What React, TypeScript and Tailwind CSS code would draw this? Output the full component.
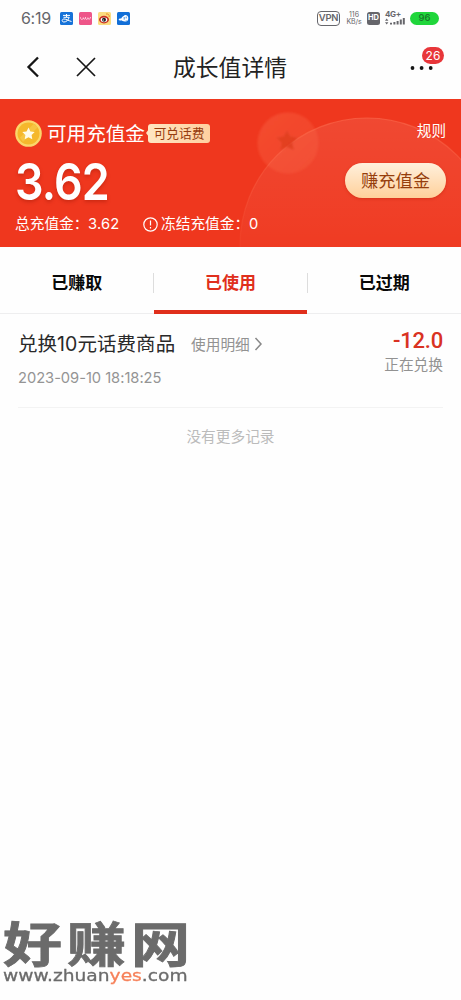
import React from "react";

const cjk = "font-['Noto_Sans_CJK_SC',sans-serif]";
const latin = "font-['Inter','Noto_Sans_CJK_SC',sans-serif]";

function StatusBar() {
  return (
    <div className={`flex h-9 items-center pl-[21px] pr-[22px] text-[#66666b] ${latin}`}>
      <span className="w-[39px] whitespace-nowrap text-[16px] leading-none tracking-[-0.3px]">6:19</span>
      <div className="flex gap-[6px]">
        <svg width="13" height="13" viewBox="0 0 13 13">
          <rect width="13" height="13" rx="1.5" fill="#1672d8" />
          <path d="M3 3.4h7M6.5 2v3M3.5 5.3h5.7C8.4 8.2 6.2 10 4 10 1.4 10 1.7 7 4 7c2.4 0 4.3 1.7 7.5 2.5" fill="none" stroke="#fff" strokeWidth="1" />
        </svg>
        <svg width="13" height="13" viewBox="0 0 13 13">
          <rect width="13" height="13" rx="1.5" fill="#ee5689" />
          <path d="M1.5 5.2c0 3 2.5 3 2.8.5 0 2 2.2 2 2.2-.5 0 3 2.2 3 2.4.5.3 2.4 2.4 2 2.6-.7" fill="none" stroke="#ffd8e4" strokeWidth="0.9" />
        </svg>
        <svg width="13" height="13" viewBox="0 0 13 13">
          <rect width="13" height="13" rx="1.5" fill="#fbdc80" />
          <ellipse cx="6" cy="7.6" rx="5" ry="3.8" fill="#c93022" />
          <ellipse cx="6" cy="7.8" rx="3.3" ry="2.4" fill="#fff" />
          <circle cx="6" cy="7.8" r="2" fill="#222" />
          <circle cx="5.4" cy="8" r="0.6" fill="#fff" />
          <path d="M8 2c2.2-.4 3.6 1 3.2 3" fill="none" stroke="#ed8a24" strokeWidth="1" />
        </svg>
        <svg width="13" height="13" viewBox="0 0 13 13">
          <rect width="13" height="13" rx="1.5" fill="#126fd7" />
          <path d="M1.5 7.5 3 6.3l1 .4c1-2 2.5-2.6 3.5-3.5 2-.4 3.5.5 3.8 2.5.3 2.3-1 3.9-3 3.8C6 9.600 5 8.600 4 8.300l-1 .5z" fill="#fff" />
          <path d="M7.200 5v2.600M9.200 4.600v1.800M9.200 8v.6" stroke="#126fd7" strokeWidth="0.8" />
        </svg>
      </div>
      <div className="ml-auto flex items-center">
        <span className="flex h-[15px] w-[23px] items-center justify-center rounded-[4px] border-[1.5px] border-[#66666b] text-[9.500px] font-semibold leading-none tracking-[-0.3px]">VPN</span>
        <span className="ml-[6px] flex w-[16px] flex-col items-center text-[7px] leading-[7px]">
          <span>116</span>
          <span className="whitespace-nowrap tracking-[-0.1px]">KB/s</span>
        </span>
        <span className="ml-[5px] flex h-[13px] w-[13px] items-center justify-center rounded-[2.500px] bg-[#66666b] text-[7.500px] font-bold leading-none text-white">HD</span>
        <span className="ml-[5px] flex w-[20px] flex-col">
          <span className="h-[7px] whitespace-nowrap text-[8px] font-bold leading-[7px] tracking-[-0.3px]">4G+</span>
          <svg width="20" height="7" viewBox="0 0 20 7" fill="#66666b">
            <path d="M0 2.800 1.700.500l1.700 2.300zM0 4.200l1.700 2.300 1.700-2.300zM5 4.800h2v1.700H5zM8.400 4h2v2.500h-2zM11.600 3h2v3.500h-2zM14.800 1.600h2v4.900h-2zM17.800 0h2v6.500h-2z" />
          </svg>
        </span>
        <span className="ml-[5px] flex h-[13px] w-[29px] items-center justify-center rounded-full bg-[#20d63b] text-[9.500px] font-medium leading-none text-[#187728]">96</span>
      </div>
    </div>
  );
}

function NavBar() {
  return (
    <div className="relative flex h-[63px] items-center pb-px">
      <svg className="ml-[26px] -mt-px" width="14" height="22" viewBox="0 0 14 22" fill="none" stroke="#161616" strokeWidth="2.300">
        <path d="M12 1.500 2.500 11 12 20.500" />
      </svg>
      <svg className="ml-[36px]" width="20" height="20" viewBox="0 0 20 20" fill="none" stroke="#161616" strokeWidth="1.700">
        <path d="M1 1 19 19M19 1 1 19" />
      </svg>
      <h1 className={`ml-[77px] whitespace-nowrap text-[22.800px] leading-[30px] text-[#222] ${cjk}`}>成长值详情</h1>
      <svg className="ml-auto mr-[27px] mt-px" width="24" height="4" viewBox="0 0 24 4" fill="#161616">
        <circle cx="2.500" cy="2" r="1.900" />
        <circle cx="11.600" cy="2" r="1.900" />
        <circle cx="20.700" cy="2" r="1.900" />
      </svg>
      <span className={`absolute right-[17px] top-[11px] flex h-[17px] w-[22px] items-center justify-center rounded-full bg-[#e8363a] text-[12px] leading-none text-white ${latin}`}>26</span>
    </div>
  );
}

function Coin() {
  return (
    <svg width="27" height="27" viewBox="0 0 27 27">
      <circle cx="13.500" cy="13.500" r="13.300" fill="#fbd66b" />
      <circle cx="13.500" cy="13.500" r="11" fill="#f5b82c" />
      <path d="M5 17.500 18.500 4a11 11 0 0 1 4 3.500L8 22z" fill="#fad257" opacity=".5" />
      <path d="m13.500 7.500 1.900 3.900 4.300.6-3.100 3 .7 4.300-3.800-2-3.800 2 .7-4.300-3.100-3 4.300-.6z" fill="#fffbe8" />
    </svg>
  );
}

function Balance() {
  return (
    <section className="relative h-[148px] overflow-hidden bg-[#ef371e] text-white">
      <svg className="absolute inset-0" width="461" height="148" viewBox="0 0 461 148">
        <defs>
          <linearGradient id="disc" x1="0" y1="0" x2="0" y2="1">
            <stop offset="0" stopColor="#fff" stopOpacity=".09" />
            <stop offset=".6" stopColor="#fff" stopOpacity="0.01" />
          </linearGradient>
          <linearGradient id="rim" x1="0" y1="0" x2="0" y2="1">
            <stop offset="0" stopColor="#fb6b4e" stopOpacity=".6" />
            <stop offset=".5" stopColor="#fb6b4e" stopOpacity=".1" />
          </linearGradient>
          <linearGradient id="medal" x1="0" y1="0" x2="1" y2="1">
            <stop offset="0" stopColor="#ff7c58" stopOpacity=".3" />
            <stop offset="1" stopColor="#ff7c58" stopOpacity=".16" />
          </linearGradient>
          <filter id="soft"><feGaussianBlur stdDeviation="1" /></filter>
        </defs>
        <circle cx="367" cy="146" r="127" fill="url(#disc)" stroke="url(#rim)" strokeWidth="1.200" />
        <g filter="url(#soft)">
          <circle cx="288" cy="44" r="30.500" fill="url(#medal)" />
          <path d="m287 31 3.400 6.600 7.500 1-5.500 5.200 1.500 7.500-6.900-3.400-6.800 3.400 1.400-7.500-5.500-5.200 7.500-1z" fill="#dd3b20" opacity=".72" />
        </g>
      </svg>

      <div className="relative flex h-full justify-between">
        <div className="flex flex-col pl-[15px] pt-[20px]">
          <div className="flex h-[28px] items-center">
            <Coin />
            <span className={`ml-[5px] w-[98px] whitespace-nowrap text-[19.600px] leading-[28px] ${cjk}`}>可用充值金</span>
            <svg className="ml-px shrink-0" width="3" height="8" viewBox="0 0 3 8"><path d="M3 0v8L0 4z" fill="#ffe6c2" /></svg>
            <span className={`-ml-px flex h-[19px] w-[62px] items-center justify-center rounded-[3px] bg-gradient-to-r from-[#ffe6c2] to-[#ffd0a0] pb-px text-[12.700px] leading-[18px] text-[#963c0f] ${cjk}`}>可兑话费</span>
          </div>
          <strong className="mt-[10px] block h-[50px] w-max origin-left scale-x-[.88] whitespace-nowrap font-['Inter',sans-serif] text-[51px] font-semibold leading-[49px] tracking-[-1px] [text-shadow:0_2px_4px_rgba(140,20,0,.35)]">3.62</strong>
          <div className={`mt-[6px] flex h-[22px] items-center whitespace-nowrap text-[14.700px] leading-[22px] ${latin}`}>
            <span className="w-[73px]">总充值金：</span>
            <span className="w-[55px] tracking-[0.200px]">3.62</span>
            <svg className="mr-[3px]" width="15" height="15" viewBox="0 0 15 15" fill="none" stroke="white" strokeWidth="1.200">
              <circle cx="7.500" cy="7.500" r="6.700" />
              <path d="M7.500 3.500v5M7.500 10v1.500" />
            </svg>
            <span className="w-[88px]">冻结充值金：</span>
            <span>0</span>
          </div>
        </div>
        <div className={`flex flex-col items-end pr-[15px] pt-[20px] ${cjk}`}>
          <button className="h-[22px] text-[14.600px] leading-[22px]">规则</button>
          <button className="mt-[22px] h-[35px] w-[101px] rounded-full bg-gradient-to-b from-[#fff0dc] to-[#ffd09a] pb-[2px] text-[17.300px] leading-[32px] text-[#963e0c] shadow-[0_1px_3px_rgba(180,30,0,.4)]">赚充值金</button>
        </div>
      </div>
    </section>
  );
}

function Tabs() {
  return (
    <nav className={`grid h-[67px] shrink-0 grid-cols-3 grid-rows-[67px] text-center text-[17px] font-bold leading-[24px] text-[#080808] ${cjk}`}>
      <button className="flex items-start border-b border-[#eeeeef] pt-[23px]">
        <span className="flex-1">已赚取</span>
        <i className="-ml-px mt-[3px] h-[20px] w-px bg-[#ddd]" />
      </button>
      <button className="flex items-start justify-center border-b-4 border-[#e02f1c] pt-[23px] text-[#e02f1c]">已使用</button>
      <button className="flex items-start border-b border-[#eeeeef] pt-[23px]">
        <i className="-mr-px mt-[3px] h-[20px] w-px bg-[#ddd]" />
        <span className="flex-1">已过期</span>
      </button>
    </nav>
  );
}

function RecordRow() {
  return (
    <article className={`mx-[18px] flex h-[94px] shrink-0 justify-between border-b border-[#f3f3f3] pt-[15px] ${latin}`}>
      <div>
        <div className="flex h-[30px] items-center whitespace-nowrap">
          <span className="w-[173px] text-[19.500px] leading-[30px] tracking-[0.050px] text-[#292929]">兑换10元话费商品</span>
          <span className="mt-[2px] w-[63px] text-[14.700px] leading-[28px] text-[#929292]">使用明细</span>
          <svg width="9" height="14" viewBox="0 0 9 14" fill="none" stroke="#888" strokeWidth="1.500"><path d="m1.500 1 5.500 6-5.500 6" /></svg>
        </div>
        <time className="mt-[8px] block h-[22px] whitespace-nowrap text-[14.700px] leading-[22px] tracking-[-0.030px] text-[#949494]">2023-09-10 18:18:25</time>
      </div>
      <div className="flex flex-col items-end">
        <span className="h-[22px] whitespace-nowrap font-['Roboto',sans-serif] text-[22px] font-medium leading-[23px] tracking-[-0.200px] text-[#d93222]">-12.0</span>
        <span className="mt-[3px] text-[14.700px] leading-[22px] text-[#929292]">正在兑换</span>
      </div>
    </article>
  );
}

function Watermark() {
  return (
    <footer className="mt-auto h-[80px] w-[190px] shrink-0 pl-[3px] text-[#6b6b6b]">
      <div className="flex h-[48px] origin-top scale-y-[.8] gap-[5px] font-['Liberation_Sans','Noto_Sans_CJK_SC',sans-serif] text-[59px] font-bold leading-[64px] [-webkit-text-stroke:1px]">
        <span className="w-[59px]">好</span>
        <span className="w-[59px]">赚</span>
        <span className="w-[59px]">网</span>
      </div>
      <div className="w-max origin-left scale-x-[1.180] whitespace-nowrap font-['DejaVu_Sans',sans-serif] text-[15.800px] leading-[16px] [-webkit-text-stroke:.3px]">
        www.zhuan<span className="text-[#f68059]">yes</span>.com
      </div>
    </footer>
  );
}

export default function App() {
  return (
    <main className="flex h-[1000px] w-[461px] flex-col overflow-hidden bg-[#fefefe]">
      <StatusBar />
      <NavBar />
      <Balance />
      <Tabs />
      <RecordRow />
      <p className={`mt-[17px] text-center text-[14.700px] leading-[22px] text-[#bbb] ${cjk}`}>没有更多记录</p>
      <Watermark />
    </main>
  );
}
